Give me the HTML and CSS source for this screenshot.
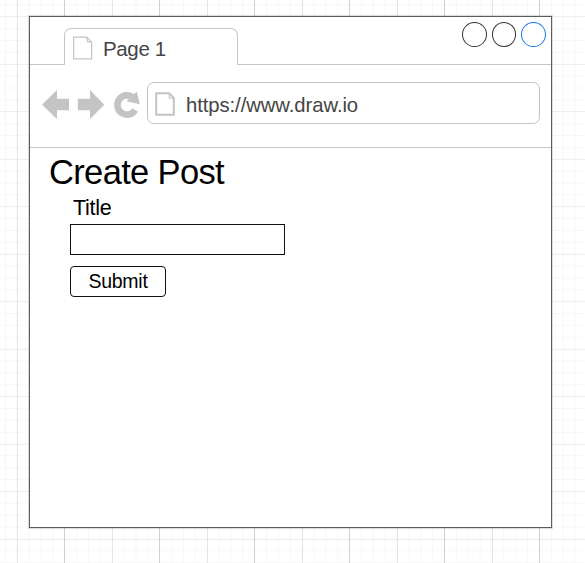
FILE: index.html
```html
<!DOCTYPE html>
<html lang="en">
<head>
<meta charset="utf-8">
<title>Create Post</title>
<link rel="stylesheet" href="styles.css">
</head>
<body>
<svg class="grid" width="585" height="563" aria-hidden="true">
  <g class="minor">
    <path d="M5 281.5H585" stroke-width="563" stroke-dasharray="1 10.865"/>
    <path d="M292 4.5V563" stroke-width="585" stroke-dasharray="1 10.865"/>
  </g>
  <path class="row" d="M0 16.5H585M0 64.5H585M0 111.5H585M0 159.5H585M0 206.5H585M0 254.5H585M0 301.5H585M0 349.5H585M0 396.5H585M0 444.5H585M0 491.5H585M0 539.5H585"/>
  <path class="major" d="M17.5 0V563M112.5 0V563M207.5 0V563M302.5 0V563M397.5 0V563M492.5 0V563"/>
  <path class="strong" d="M64.5 0V563M159.5 0V563M254.5 0V563M349.5 0V563M444.5 0V563M539.5 0V563"/>
</svg>
<main class="window">
  <header class="tabs">
    <div class="gap-left"></div>
    <div class="tab">
      <svg class="tab-icon" width="20" height="24" viewBox="0 0 20 24"><path d="M0.6 1.2H13.8L18.6 6.2V22.8H0.6ZM13.8 1.2L14.4 5.6L18.6 6.2"/></svg>
      <span>Page 1</span>
    </div>
    <div class="controls"><i class="dot"></i><i class="dot"></i><i class="dot blue"></i></div>
  </header>
  <nav class="toolbar">
    <svg class="nav-icons" width="106" height="40" viewBox="36 85 106 40">
      <path class="fill" d="M42 104.7L57 90V98.7H69V110.2H57V119Z"/>
      <path class="fill" d="M104.3 104.7L90 90V98.7H77.8V110.2H90V119Z"/>
      <path class="arc" d="M135.2 110A9.6 9.6 0 1 1 133.8 98.2"/>
      <path class="fill" d="M136.8 91.5L139.8 104.2L126.5 101.2Z"/>
    </svg>
    <div class="address">
      <svg class="page-icon" width="20" height="24" viewBox="0 0 20 24"><path d="M1.2 1.2H14.2L18.8 6.2V22.8H1.2Z"/><path class="fold" d="M14.2 1.2V6.2H18.8"/></svg>
      <span>https://www.draw.io</span>
    </div>
  </nav>
  <section class="content">
    <h1>Create Post</h1>
    <form>
      <label for="title">Title</label>
      <input id="title" type="text">
      <button type="button">Submit</button>
    </form>
  </section>
</main>
</body>
</html>
```
FILE: styles.css
```css
* { box-sizing: border-box; }
body {
  margin: 0;
  width: 585px;
  height: 563px;
  padding: 16px 0 0 29px;
  overflow: hidden;
  background: #fff;
  font-family: "Liberation Sans", Arial, sans-serif;
}
.grid { position: absolute; left: 0; top: 0; z-index: -1; fill: none; }
.minor { stroke: #f7f7f7; }
.row { stroke: #efefef; }
.major { stroke: #e4e4e4; }
.strong { stroke: #d0d0d0; }
.window {
  width: 523px;
  height: 512px;
  border: 1px solid #5c5c5c;
  box-shadow: 0 0 0 1px rgba(0, 0, 0, .13);
  background: #fff;
}
.tabs { display: flex; height: 48px; }
.gap-left { width: 34px; border-bottom: 1px solid #c4c4c4; }
.tab {
  display: flex;
  width: 174px;
  height: 37px;
  margin-top: 11px;
  padding: 8px 0 0 8px;
  border: 1px solid #c4c4c4;
  border-bottom: 0;
  border-radius: 7px 7px 0 0;
  color: #444;
  font-size: 20.5px;
  letter-spacing: -.35px;
  line-height: 23px;
}
.tab span { margin-left: 10px; }
.tab-icon { margin-top: -1px; fill: none; stroke: #c4c4c4; stroke-width: 1.2; }
.controls {
  display: flex;
  flex: 1;
  justify-content: flex-end;
  gap: 5px;
  padding: 5px 5px 0 0;
  border-bottom: 1px solid #c4c4c4;
}
.dot { width: 24.7px; height: 25px; border: 1.2px solid #333; border-radius: 50%; }
.dot.blue { border-color: #1976ef; }
.toolbar {
  display: flex;
  height: 83px;
  padding: 17px 11px 0 6px;
  border-bottom: 1px solid #c4c4c4;
}
.nav-icons { flex: none; margin: 3px 5px 0 0; }
.fill { fill: #c4c4c4; }
.arc { fill: none; stroke: #c4c4c4; stroke-width: 6.6; }
.address {
  display: flex;
  flex: 1;
  height: 42px;
  padding: 9px 0 0 7px;
  border: 1px solid #c4c4c4;
  border-radius: 7px;
  color: #444;
  font-size: 20.3px;
  letter-spacing: -.08px;
  line-height: 27px;
}
.address span { margin-left: 11px; }
.page-icon { fill: none; stroke: #c4c4c4; stroke-width: 2; }
.page-icon .fold { stroke-width: 1; }
.content { padding: 4px 0 0 19px; color: #000; }
h1 { margin: 0; font-size: 34.5px; font-weight: 400; line-height: 40px; letter-spacing: -.65px; }
form { display: flex; flex-direction: column; align-items: flex-start; padding-left: 21px; }
label { margin-left: 3px; font-size: 21.5px; line-height: 32px; letter-spacing: -.25px; }
input { width: 215px; height: 31px; margin: 0; border: 1.3px solid #111; border-radius: 0; background: #fff; }
button {
  width: 96px;
  height: 31px;
  margin-top: 11px;
  padding: 0;
  border: 1px solid #111;
  border-radius: 4px;
  background: #fff;
  color: #000;
  font: 19.5px/29px "Liberation Sans", Arial, sans-serif;
  letter-spacing: -.25px;
}
```
